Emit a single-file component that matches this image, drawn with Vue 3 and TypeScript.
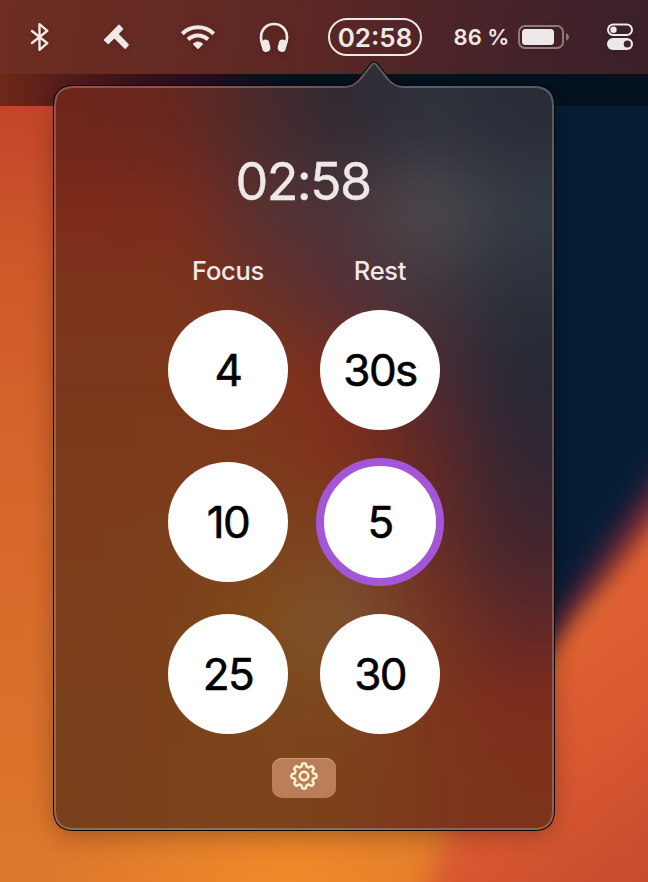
<script setup lang="ts">
import { ref } from 'vue'

interface Preset {
  label: string
  id: string
}

const remaining = ref('02:58')
const active = ref('rest-5')

const columns: { title: string; presets: Preset[] }[] = [
  {
    title: 'Focus',
    presets: [
      { label: '4', id: 'focus-4' },
      { label: '10', id: 'focus-10' },
      { label: '25', id: 'focus-25' },
    ],
  },
  {
    title: 'Rest',
    presets: [
      { label: '30s', id: 'rest-30s' },
      { label: '5', id: 'rest-5' },
      { label: '30', id: 'rest-30' },
    ],
  },
]

// Coarse tint map of the popover glass; the blur filter blends the cells.
const tints: string[][] = [
  ['#6e261c', '#67271f', '#482a2d', '#302a33', '#30323c', '#292d37'],
  ['#7f2b1b', '#7c2c1c', '#563134', '#4b363c', '#4f4b4f', '#343b44'],
  ['#7c341b', '#7d341b', '#6b3026', '#53303a', '#40353d', '#2b303a'],
  ['#7b371b', '#7c371b', '#80351b', '#7e2c1c', '#4c2933', '#272935'],
  ['#7b3a1b', '#7c3a1b', '#7d391c', '#80301b', '#622826', '#322733'],
  ['#7c3c1b', '#7c3f1b', '#7e421c', '#7a4421', '#692c25', '#42252e'],
  ['#7c3f1b', '#7c411b', '#7e4d19', '#7d5434', '#763521', '#602727'],
  ['#7a3f1b', '#7b411b', '#7c461b', '#7d461e', '#7c361b', '#802d1c'],
  ['#7a3f1b', '#7b421b', '#7c441b', '#7c401b', '#7d371b', '#7c321b'],
]

const cells = tints.flatMap((row, r) =>
  row.map((fill, c) => {
    const left = c === 0 ? -100 : 54 + c * 83.4
    const right = c === row.length - 1 ? 760 : 54 + (c + 1) * 83.4
    const top = r === 0 ? -60 : 86 + r * 82.7
    const bottom = r === tints.length - 1 ? 1000 : 86 + (r + 1) * 82.7
    return { fill, x: left, y: top, w: right - left + 1, h: bottom - top + 1 }
  }),
)

const shape =
  'M74 86 H344 C351 86 355 83.5 359.500 78.500 L370.500 64.500 Q374 60.500 377.500 64.500 ' +
  'L388.500 78.500 C393 83.500 397 86 404 86 H534 Q554 86 554 106 V810 Q554 830 534 830 H74 ' +
  'Q54 830 54 810 V106 Q54 86 74 86 Z'

function gearPath(): string {
  const points: string[] = []
  for (let i = 0; i < 240; i++) {
    const a = (i / 240) * Math.PI * 2
    const r = 11.05 + 1.5 * Math.tanh(2.6 * Math.cos(8 * a))
    points.push(`${(15 + r * Math.cos(a)).toFixed(2)} ${(15 + r * Math.sin(a)).toFixed(2)}`)
  }
  return `M${points.join('L')}Z`
}
const gear = gearPath()
</script>

<template>
  <main class="desktop">
    <svg class="wallpaper" viewBox="0 0 648 882" aria-hidden="true">
      <defs>
        <linearGradient id="warm" x1="0" y1="0" x2="0" y2="1">
          <stop offset="0.12" stop-color="#c2452a" />
          <stop offset="0.3" stop-color="#ce5929" />
          <stop offset="0.6" stop-color="#d7692b" />
          <stop offset="0.9" stop-color="#da732b" />
          <stop offset="1" stop-color="#dd782b" />
        </linearGradient>
        <radialGradient id="glow">
          <stop offset="0" stop-color="#f08a2a" />
          <stop offset="1" stop-color="#f08a2a" stop-opacity="0" />
        </radialGradient>
        <linearGradient id="flame" gradientUnits="userSpaceOnUse" x1="530" y1="680" x2="670" y2="850">
          <stop offset="0" stop-color="#df6033" />
          <stop offset="0.45" stop-color="#d85830" />
          <stop offset="1" stop-color="#c94b2e" />
        </linearGradient>
        <linearGradient id="strip" x1="0" x2="1">
          <stop offset="0" stop-color="#6e2918" />
          <stop offset="0.09" stop-color="#551d18" />
          <stop offset="0.22" stop-color="#34111b" />
          <stop offset="0.34" stop-color="#1c0e20" />
          <stop offset="0.46" stop-color="#03101c" />
          <stop offset="1" stop-color="#04111f" />
        </linearGradient>
        <filter
          id="soft"
          filterUnits="userSpaceOnUse"
          x="-100"
          y="-100"
          width="900"
          height="1100"
          color-interpolation-filters="sRGB"
        >
          <feGaussianBlur stdDeviation="13" />
        </filter>
        <filter
          id="edge"
          filterUnits="userSpaceOnUse"
          x="-100"
          y="-100"
          width="1000"
          height="1200"
          color-interpolation-filters="sRGB"
        >
          <feGaussianBlur stdDeviation="13" />
        </filter>
      </defs>
      <rect width="648" height="882" fill="url(#warm)" />
      <ellipse cx="290" cy="890" rx="240" ry="150" fill="url(#glow)" />
      <g filter="url(#soft)">
        <path d="M80 60 L140 160 L300 400 L500 700 L800 400 V40 Z" fill="#6c2330" />
        <path d="M170 40 L480 660 L554 655 L720 430 V0 Z" fill="#061c35" />
        <path d="M536 665 L572 612 L690 446" fill="none" stroke="#6a2438" stroke-width="20" />
      </g>
      <path d="M417 920 L460 800 L556 658 L602 592 L700 452 V920 Z" fill="url(#flame)" filter="url(#edge)" />
      <rect y="74" width="648" height="32" fill="url(#strip)" />
    </svg>

    <header class="menubar">
      <span class="item bluetooth">
        <svg width="20" height="32" viewBox="0 0 20 32">
          <path
            d="M2 10 L17.300 22.200 L9.500 28.800 V3.200 L17.300 9.800 L2 22"
            fill="none"
            stroke="#eee8e7"
            stroke-width="2.4"
            stroke-linejoin="round"
            stroke-linecap="round"
          />
        </svg>
      </span>
      <span class="item hammer">
        <svg width="28" height="28" viewBox="0 0 28 28">
          <path
            d="M17 2.300 L20.500 6 L15.800 11 L26.200 21.800 L23.200 25.300 L12.300 14.600 L6.300 20.500 L2.500 16.900 Z"
            fill="#eee8e7"
            stroke="#eee8e7"
            stroke-width="1.400"
            stroke-linejoin="round"
          />
        </svg>
      </span>
      <span class="item wifi">
        <svg width="36" height="28" viewBox="0 0 36 28">
          <g fill="none" stroke="#eee8e7" stroke-width="4">
            <path d="M2.300 10.700 A22.500 22.500 0 0 1 33.700 10.700" />
            <path d="M8 16.500 A14.300 14.300 0 0 1 28 16.500" />
          </g>
          <path
            d="M13.200 20.600 Q18 16.200 22.800 20.600 Q23.300 21.100 22.800 21.600 L18.600 25.700 Q18 26.300 17.400 25.700 L13.200 21.600 Q12.700 21.100 13.200 20.600Z"
            fill="#eee8e7"
          />
        </svg>
      </span>
      <span class="item phones">
        <svg width="32" height="32" viewBox="0 0 32 32">
          <path
            d="M5 25 C3.500 22 3 19.500 3 16.500 C3 8.500 8.500 3 16 3 S29 8.500 29 16.500 C29 19.500 28.500 22 27 25"
            fill="none"
            stroke="#eee8e7"
            stroke-width="2.7"
          />
          <rect x="3.600" y="18.600" width="8.200" height="12.400" rx="4.100" transform="rotate(-13 7.500 24.600)" fill="#eee8e7" />
          <rect x="20.200" y="18.600" width="8.200" height="12.400" rx="4.100" transform="rotate(13 24.500 24.600)" fill="#eee8e7" />
        </svg>
      </span>
      <span class="item"><span class="pill">{{ remaining }}</span></span>
      <span class="item battery">
        <span class="percent">86 %</span>
        <svg width="52" height="26" viewBox="0 0 52 26">
          <rect x="1" y="2" width="44" height="22" rx="6" fill="none" stroke="#94797a" stroke-width="2" />
          <rect x="4" y="5" width="32" height="16" rx="3.500" fill="#eee8e9" />
          <path d="M48 9 Q51 10.500 51 13 T48 17Z" fill="#94797a" />
        </svg>
      </span>
      <span class="item controls">
        <svg width="28" height="30" viewBox="0 0 28 30">
          <rect x="2" y="2.500" width="24" height="10.500" rx="5.250" fill="none" stroke="#eee8e9" stroke-width="2" />
          <circle cx="7.500" cy="7.800" r="3.200" fill="#eee8e9" />
          <rect x="1" y="16" width="26" height="12" rx="6" fill="#eee8e9" />
          <circle cx="21.300" cy="22" r="3.600" fill="#40242a" />
        </svg>
      </span>
    </header>

    <section class="popover">
      <svg class="glass" viewBox="0 0 648 882" aria-hidden="true">
        <defs>
          <clipPath id="body"><path :d="shape" /></clipPath>
          <filter
            id="blend"
            filterUnits="userSpaceOnUse"
            x="-100"
            y="-60"
            width="860"
            height="1060"
            color-interpolation-filters="sRGB"
          >
            <feGaussianBlur stdDeviation="34" />
          </filter>
          <filter id="shadow" filterUnits="userSpaceOnUse" x="0" y="0" width="648" height="882">
            <feGaussianBlur stdDeviation="13" />
          </filter>
        </defs>
        <rect x="55" y="106" width="498" height="728" rx="20" fill="#000" opacity="0.3" filter="url(#shadow)" />
        <path :d="shape" fill="none" stroke="#080808" stroke-width="2" />
        <g clip-path="url(#body)">
          <g filter="url(#blend)">
            <rect
              v-for="(cell, i) in cells"
              :key="i"
              :x="cell.x"
              :y="cell.y"
              :width="cell.w"
              :height="cell.h"
              :fill="cell.fill"
            />
          </g>
          <path :d="shape" fill="none" stroke="#fff" stroke-opacity="0.22" stroke-width="4" />
        </g>
      </svg>

      <h1 class="clock">{{ remaining }}</h1>
      <div class="columns">
        <div v-for="column in columns" :key="column.title" class="column">
          <h2 class="title">{{ column.title }}</h2>
          <button
            v-for="preset in column.presets"
            :key="preset.id"
            class="preset"
            :class="{ active: preset.id === active }"
            @click="active = preset.id"
          >
            {{ preset.label }}
          </button>
        </div>
      </div>
      <button class="settings" aria-label="Settings">
        <svg width="30" height="30" viewBox="0 0 30 30" fill="none" stroke="#fff3d0" stroke-width="2.4" stroke-linejoin="round">
          <path :d="gear" />
          <circle cx="15" cy="15" r="4.200" />
        </svg>
      </button>
    </section>
  </main>
</template>

<style>
body {
  margin: 0;
  overflow: hidden;
}
</style>

<style scoped>
.desktop {
  position: relative;
  width: 648px;
  height: 882px;
  overflow: hidden;
  font-family: Inter, 'Liberation Sans', sans-serif;
  color: #eee8e7;
}
.wallpaper,
.glass {
  position: absolute;
  top: 0;
  left: 0;
  width: 648px;
  height: 882px;
}
.glass {
  z-index: -1;
}
.menubar {
  position: relative;
  display: grid;
  grid-template-columns: 78px 78px 76px 76px 126px 156px 57px;
  align-items: center;
  box-sizing: border-box;
  height: 74px;
  background: linear-gradient(97deg, #6e2e22, #5d2723 45%, #47232a 76%, #3b2029);
}
.item {
  display: flex;
  align-items: center;
  justify-content: center;
}
.item svg {
  display: block;
  filter: drop-shadow(0 2px 3px rgba(0, 0, 0, 0.15));
}
.bluetooth {
  padding-left: 2px;
}
.hammer {
  padding-right: 2px;
}
.wifi {
  padding-left: 8px;
}
.phones {
  padding-left: 8px;
}
.controls {
  padding-left: 2px;
}
.pill {
  box-sizing: border-box;
  width: 94px;
  height: 38px;
  margin-left: 8px;
  border: 2px solid #eee8e7;
  border-radius: 19px;
  font-size: 26px;
  font-weight: 600;
  line-height: 35px;
  text-align: center;
}
.battery {
  gap: 9px;
}
.percent {
  font-size: 22px;
  font-weight: 600;
  white-space: nowrap;
}
.popover {
  position: absolute;
  z-index: 1;
  top: 0;
  left: 0;
  display: flex;
  flex-direction: column;
  align-items: center;
  box-sizing: border-box;
  width: 648px;
  height: 882px;
  padding: 150px 94px 52px 54px;
}
.clock {
  margin: 0;
  padding-right: 2px;
  font-size: 52px;
  font-weight: 400;
  line-height: 64px;
  letter-spacing: -1.7px;
  -webkit-text-stroke: 0.4px #eee8e7;
}
.columns {
  display: flex;
  gap: 32px;
  margin-top: 41px;
}
.column {
  display: flex;
  flex-direction: column;
  align-items: center;
  gap: 32px;
  width: 120px;
}
.title {
  margin: 0 0 -9px;
  font-size: 25.5px;
  font-weight: 500;
  line-height: 32px;
  letter-spacing: -0.3px;
}
.preset {
  box-sizing: border-box;
  width: 120px;
  height: 120px;
  padding: 0 0 0 0;
  border: 0;
  border-radius: 50%;
  background: #fff;
  color: #000;
  font: 400 44px/120px Inter, 'Liberation Sans', sans-serif;
  letter-spacing: -1.6px;
  -webkit-text-stroke: 0.6px #000;
}
.preset.active {
  width: 128px;
  height: 128px;
  margin: -4px;
  border: 8px solid #a356d8;
  line-height: 112px;
}
.settings {
  display: flex;
  justify-content: center;
  width: 64px;
  height: 40px;
  margin-top: 24px;
  padding: 3px 0 0;
  border: 0;
  border-radius: 10px;
  background: #ba7f58;
  box-shadow: inset 0 1px 0 #d19b70;
}
</style>
